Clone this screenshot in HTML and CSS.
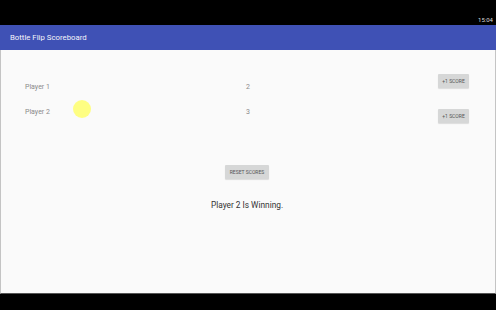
FILE: index.html
```html
<!DOCTYPE html>
<html lang="en">
<head>
    <meta charset="UTF-8">
    <meta name="viewport" content="width=device-width, initial-scale=1.0">
    <title>Bottle Flip Scoreboard</title>
    <link rel="stylesheet" href="styles.css">
</head>
<body>

    <div class="status-bar">
        <span class="clock">15:04</span>
    </div>

    <div class="app-bar">
        <h1>Bottle Flip Scoreboard</h1>
    </div>

    <div class="screen">
        <div class="player-row row-one">
            <span class="player-name">Player 1</span>
            <span class="player-score">2</span>
            <button class="score-button">+1 SCORE</button>
        </div>

        <div class="player-row row-two">
            <span class="player-name">Player 2</span>
            <span class="player-score">3</span>
            <button class="score-button">+1 SCORE</button>
        </div>

        <div class="reset-wrap">
            <button class="reset-button">RESET SCORES</button>
        </div>

        <p class="winner">Player 2 Is Winning.</p>

        <!-- touch indicator -->
        <div class="touch-dot"></div>
    </div>

</body>
</html>
```

FILE: styles.css
```css
body {
    margin: 0;
    background-color: #000;
    font-family: Roboto, "Liberation Sans", sans-serif;
    height: 310px;
    overflow: hidden;
}
.status-bar {
    height: 25px;
    display: flex;
    justify-content: flex-end;
    align-items: flex-end;
    padding-right: 3px;
    box-sizing: border-box;
}
.clock {
    color: #d8d8d8;
    font-size: 6px;
    line-height: 8px;
    padding-bottom: 1px;
}
.app-bar {
    height: 25px;
    background-color: #3f51b5;
    display: flex;
    align-items: center;
    padding-left: 10px;
    box-shadow: 0 1px 2px rgba(0, 0, 0, 0.25);
    position: relative;
}
.app-bar h1 {
    margin: 0;
    color: #f4f4fa;
    font-size: 7.8px;
    font-weight: 400;
}
.screen {
    position: relative;
    height: 244px;
    background-color: #fafafa;
    border-left: 1px solid #c4c4c4;
    border-right: 1px solid #c4c4c4;
    border-bottom: 1px solid #555;
    box-sizing: border-box;
    padding: 24px 26px 0 24px;
}
.player-row {
    display: flex;
    align-items: flex-start;
}
.row-two {
    margin-top: 17px;
}
.player-name {
    width: 221px;
    color: #8a8a8a;
    font-size: 7px;
    line-height: 8px;
}
.player-score {
    flex: 1;
    color: #8a8a8a;
    font-size: 7px;
    line-height: 8px;
}
.row-one .player-name,
.row-one .player-score {
    margin-top: 9px;
}
.row-two .score-button {
    margin-top: 1px;
}
button {
    font-family: Roboto, "Liberation Sans", sans-serif;
    border: none;
    border-radius: 1px;
    background-color: #d6d7d7;
    color: #555;
    padding: 0;
    box-shadow: 0 1px 1px rgba(0, 0, 0, 0.12);
}
.score-button {
    width: 31px;
    height: 14px;
    font-size: 5px;
}
.reset-wrap {
    display: flex;
    justify-content: center;
    margin-top: 42px;
}
.reset-button {
    width: 44px;
    height: 14px;
    font-size: 5px;
}
.winner {
    margin: 20px 0 0;
    text-align: center;
    font-size: 8.3px;
    line-height: 12px;
    color: #333;
}
.touch-dot {
    position: absolute;
    left: 72px;
    top: 50px;
    width: 18px;
    height: 18px;
    border-radius: 50%;
    background-color: rgba(255, 255, 100, 0.8);
}
```
